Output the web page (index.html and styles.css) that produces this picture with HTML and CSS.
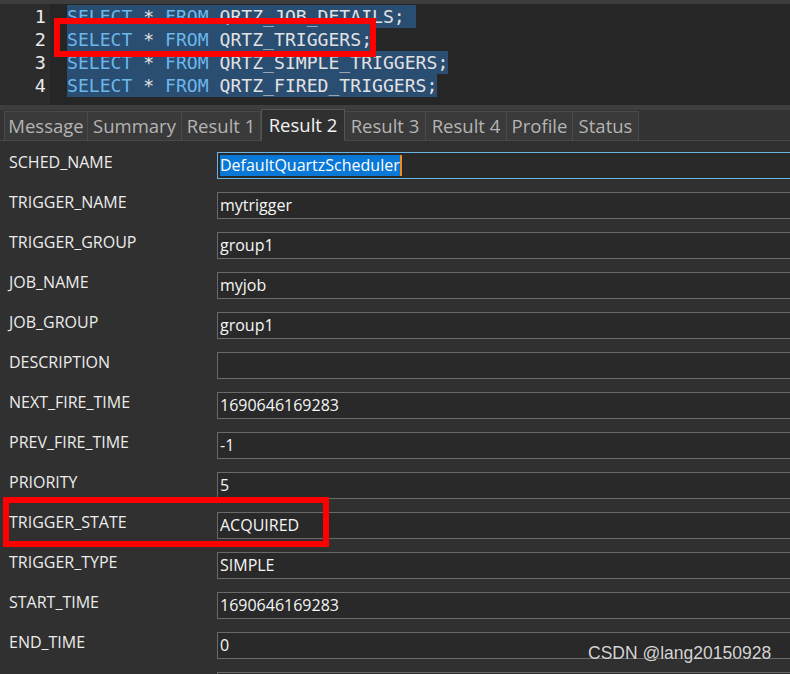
FILE: index.html
```html
<!DOCTYPE html>
<html>
<head>
<meta charset="utf-8">
<link rel="stylesheet" href="styles.css">
</head>
<body>
<div class="page">
  <div class="topbar"></div>
  <div class="editor">
    <div class="gutter">
      <div>1</div><div>2</div><div>3</div><div>4</div>
    </div>
    <div class="code">
      <div class="line"><span class="sel"><span class="kw">SELECT</span> * <span class="kw">FROM</span> QRTZ_JOB_DETAILS;&nbsp;</span></div>
      <div class="line"><span class="sel"><span class="kw">SELECT</span> * <span class="kw">FROM</span> QRTZ_TRIGGERS;</span></div>
      <div class="line"><span class="sel"><span class="kw">SELECT</span> * <span class="kw">FROM</span> QRTZ_SIMPLE_TRIGGERS;</span></div>
      <div class="line"><span class="sel"><span class="kw">SELECT</span> * <span class="kw">FROM</span> QRTZ_FIRED_TRIGGERS;</span></div>
    </div>
  </div>
  <div class="splitter"></div>
  <div class="tabs">
    <div class="tab w-msg">Message</div>
    <div class="tab w-sum">Summary</div>
    <div class="tab w-r1">Result 1</div>
    <div class="tab active w-r2">Result 2</div>
    <div class="tab w-r3">Result 3</div>
    <div class="tab w-r4">Result 4</div>
    <div class="tab w-pro">Profile</div>
    <div class="tab w-sta">Status</div>
  </div>
  <div class="form">
    <div class="row"><div class="label">SCHED_NAME</div><div class="field focus"><span class="picked">DefaultQuartzScheduler</span><span class="caret"></span></div></div>
    <div class="row"><div class="label">TRIGGER_NAME</div><div class="field">mytrigger</div></div>
    <div class="row"><div class="label">TRIGGER_GROUP</div><div class="field">group1</div></div>
    <div class="row"><div class="label">JOB_NAME</div><div class="field">myjob</div></div>
    <div class="row"><div class="label">JOB_GROUP</div><div class="field">group1</div></div>
    <div class="row"><div class="label">DESCRIPTION</div><div class="field"></div></div>
    <div class="row"><div class="label">NEXT_FIRE_TIME</div><div class="field">1690646169283</div></div>
    <div class="row"><div class="label">PREV_FIRE_TIME</div><div class="field">-1</div></div>
    <div class="row"><div class="label">PRIORITY</div><div class="field">5</div></div>
    <div class="row"><div class="label">TRIGGER_STATE</div><div class="field">ACQUIRED</div></div>
    <div class="row"><div class="label">TRIGGER_TYPE</div><div class="field">SIMPLE</div></div>
    <div class="row"><div class="label">START_TIME</div><div class="field">1690646169283</div></div>
    <div class="row"><div class="label">END_TIME</div><div class="field">0</div></div>
    <div class="row"><div class="label"></div><div class="field"></div></div>
  </div>
  <div class="mark mark-sql"></div>
  <div class="mark mark-state"></div>
  <div class="watermark">CSDN @lang20150928</div>
</div>
</body>
</html>
```
FILE: styles.css
```css
html, body {
  margin: 0;
  padding: 0;
}
body {
  width: 790px;
  height: 674px;
  overflow: hidden;
  background: #303030;
}
.page {
  position: relative;
  width: 790px;
  height: 674px;
  overflow: hidden;
  background: #303030;
}
.topbar {
  height: 4px;
  background: #3d3d3d;
}
.editor {
  display: flex;
  height: 101px;
  background: #262626;
}
.gutter {
  width: 50px;
  box-sizing: border-box;
  padding: 1px 4px 0 0;
  background: #2c2c2c;
  color: #ececec;
  text-align: right;
  font-family: "DejaVu Sans Mono", monospace;
  font-size: 18.5px;
  line-height: 23px;
}
.code {
  flex: 1;
  padding: 1px 0 0 17px;
  font-family: "DejaVu Sans Mono", monospace;
  font-size: 18.1px;
  line-height: 23px;
  color: #e2e2e2;
}
.line {
  height: 23px;
  white-space: pre;
}
.sel {
  display: inline-block;
  height: 23px;
  vertical-align: top;
  background: #2a4d72;
}
.kw {
  color: #6cb8ea;
}
.splitter {
  height: 5px;
  background: #3e3e3e;
}
.tabs {
  display: flex;
  align-items: flex-end;
  height: 31px;
  box-sizing: border-box;
  padding-left: 4px;
  background: #333333;
  border-bottom: 1px solid #484848;
}
.tab {
  box-sizing: border-box;
  height: 30px;
  margin-bottom: -1px;
  border: 1px solid #4a4a4a;
  border-left: none;
  border-bottom: 1px solid #484848;
  background: #3a3a3a;
  color: #b4b4b4;
  font-family: "Open Sans", sans-serif;
  font-size: 18.5px;
  line-height: 28px;
  text-align: center;
  white-space: nowrap;
}
.tab.w-msg { border-left: 1px solid #4a4a4a; }
.tab.active {
  height: 32px;
  background: #303030;
  color: #f2f2f2;
  border: 1px solid #555555;
  border-bottom: 1px solid #303030;
  line-height: 29px;
}
.w-msg { width: 84px; }
.w-sum { width: 94px; }
.w-r1 { width: 79px; }
.w-r2 { width: 84px; }
.w-r3 { width: 81px; }
.w-r4 { width: 81px; }
.w-pro { width: 66px; }
.w-sta { width: 66px; }
.form {
  padding-top: 11px;
}
.row {
  display: flex;
  height: 40px;
}
.label {
  width: 208px;
  flex: none;
  padding-left: 9px;
  color: #ececec;
  font-family: "Open Sans", sans-serif;
  font-size: 16px;
  line-height: 20px;
  white-space: nowrap;
}
.field {
  flex: none;
  width: 640px;
  height: 27px;
  box-sizing: border-box;
  border: 1px solid #6a6a6a;
  background: #292929;
  padding-left: 2px;
  color: #f6f6f6;
  font-family: "Open Sans", sans-serif;
  font-size: 16px;
  line-height: 25px;
  white-space: nowrap;
  display: flex;
  align-items: center;
}
.field.focus {
  border-color: #6cb4e6;
}
.picked {
  display: inline-block;
  height: 21px;
  line-height: 21px;
  background: #0a78d6;
  color: #ffffff;
}
.caret {
  display: inline-block;
  width: 2px;
  height: 21px;
  background: #f08a24;
}
.mark {
  position: absolute;
  box-sizing: border-box;
  border: 6px solid #ff0000;
}
.mark-sql {
  left: 54px;
  top: 18px;
  width: 322px;
  height: 39px;
}
.mark-state {
  left: 3px;
  top: 497px;
  width: 326px;
  height: 50px;
}
.watermark {
  position: absolute;
  left: 588px;
  top: 642px;
  color: #d4d4d4;
  font-family: "Liberation Sans", Arial, sans-serif;
  font-size: 17.5px;
  line-height: 22px;
  text-shadow: 0 0 1px #222;
  white-space: nowrap;
}
```
